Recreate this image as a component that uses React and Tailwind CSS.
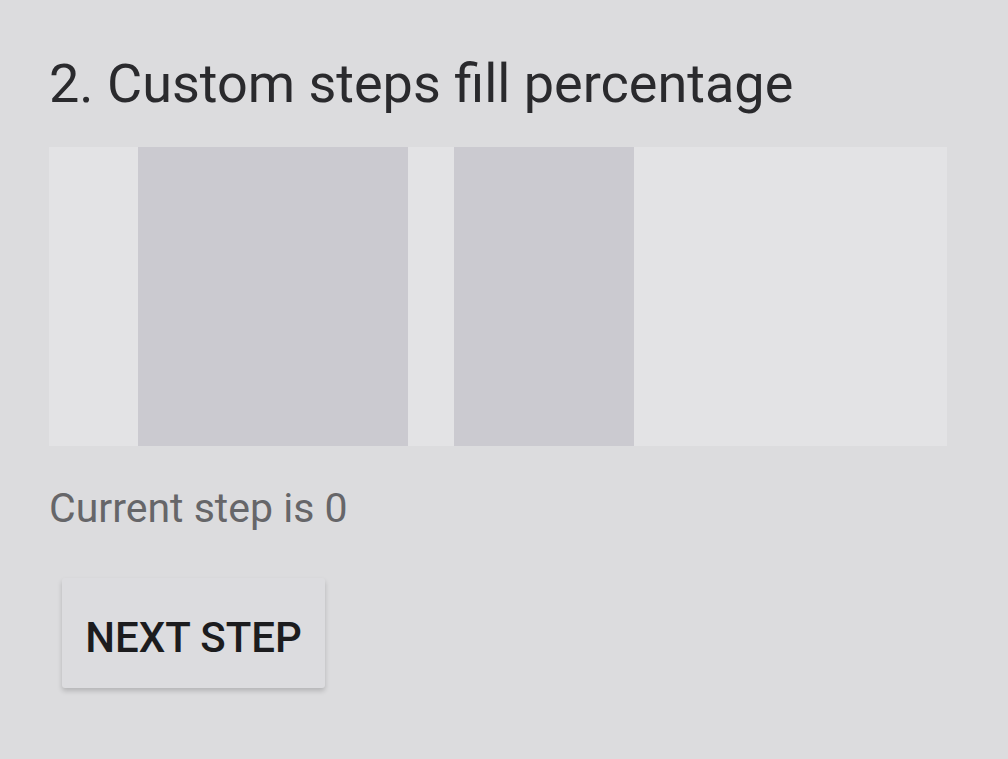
import React from 'react';

const segments = [
  { width: 'w-[89px]', fill: false },
  { width: 'w-[270px]', fill: true },
  { width: 'w-[46px]', fill: false },
  { width: 'w-[180px]', fill: true },
];

export default function App() {
  return (
    <div className="min-h-[759px] w-full bg-[#dcdcde] px-[49px] pt-[52px] font-['Roboto',sans-serif]">
      <h1 className="text-[54px] leading-[64px] text-[#2a2a2d]">
        2. Custom steps fill percentage
      </h1>

      <div className="mt-[31px] flex h-[299px] w-[898px] bg-[#e3e3e5]">
        {segments.map((s, i) => (
          <div key={i} className={`${s.width} h-full ${s.fill ? 'bg-[#cbcad0]' : ''}`} />
        ))}
      </div>

      <p className="mt-[38px] text-[41px] leading-[48px] text-[#666669]">Current step is 0</p>

      <button className="mt-[46px] ml-[13px] flex h-[110px] w-[263px] items-center justify-center rounded-[3px] bg-[#dcdcdf] pt-[8px] text-[42px] font-medium text-[#1c1c1e] shadow-[0_3px_5px_rgba(0,0,0,0.18)]">
        NEXT STEP
      </button>
    </div>
  );
}
